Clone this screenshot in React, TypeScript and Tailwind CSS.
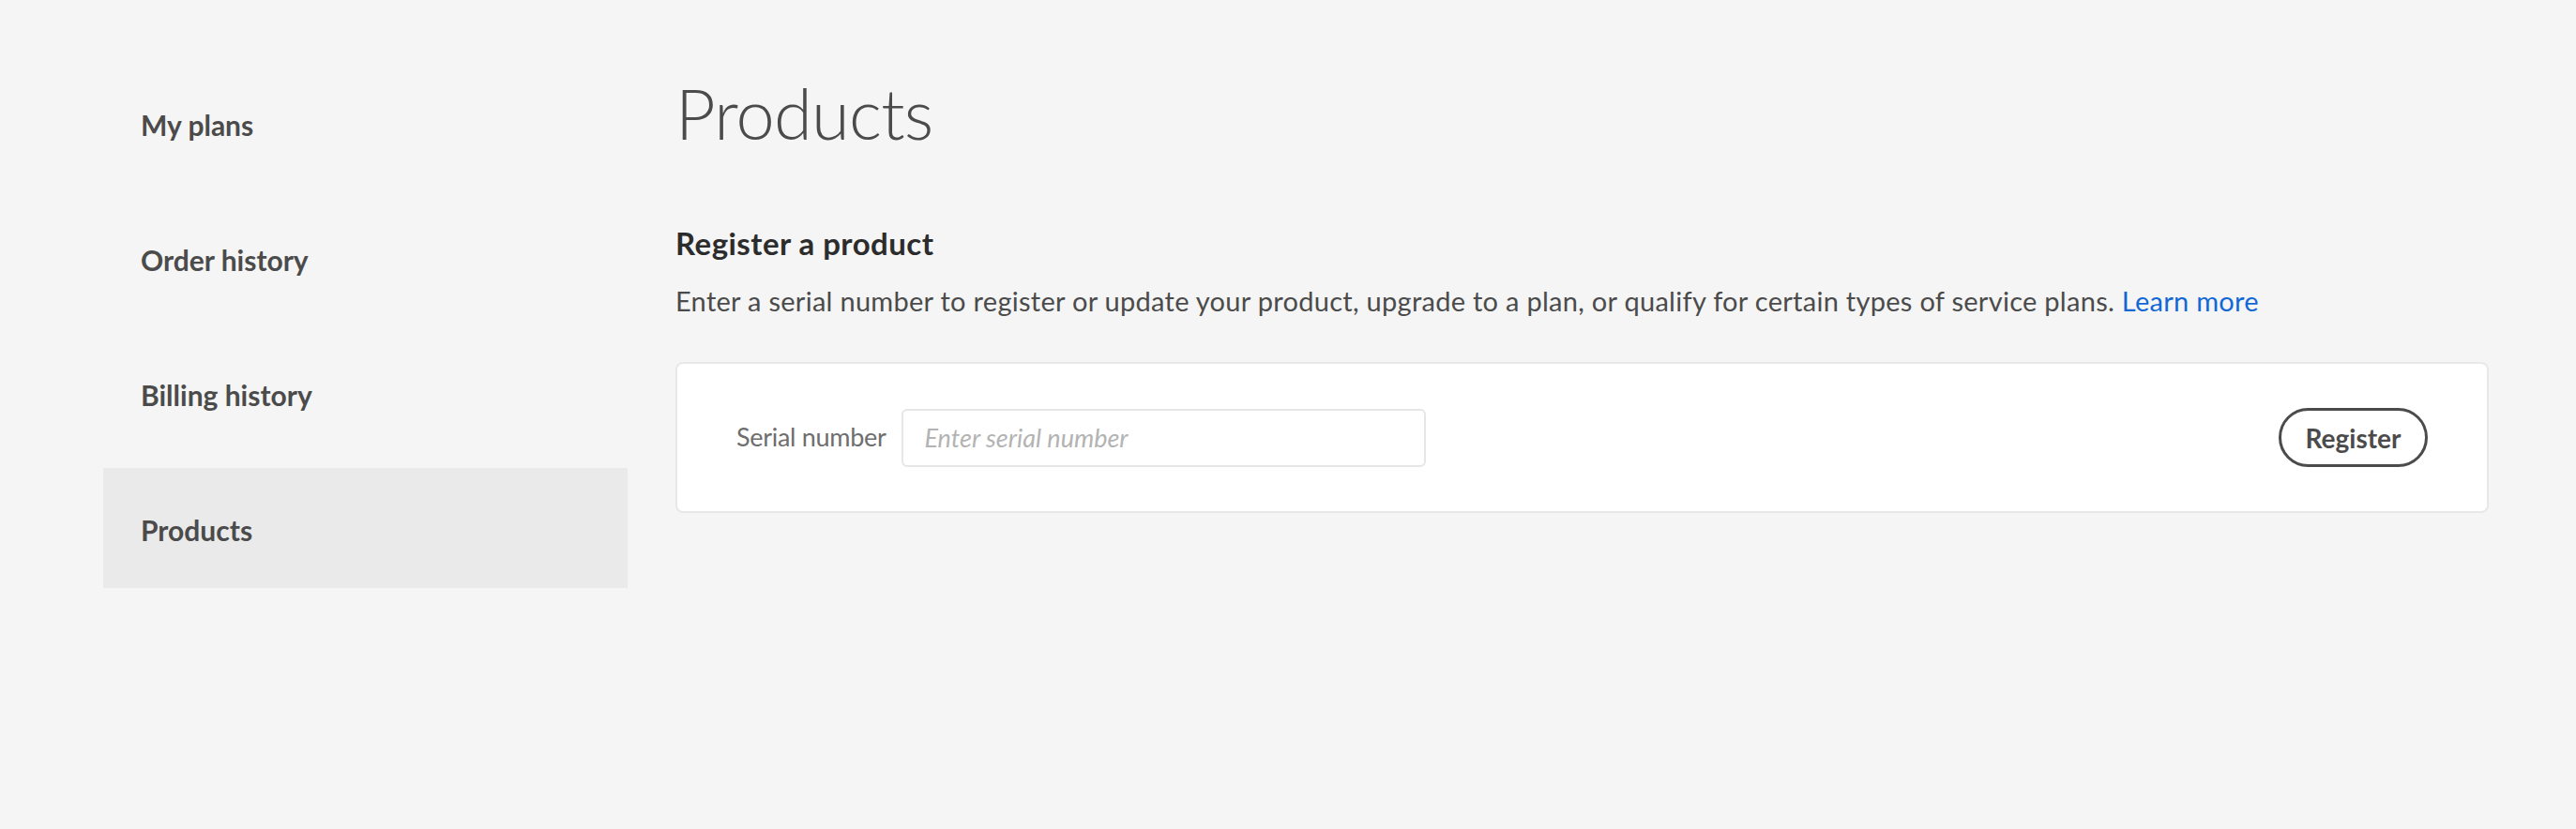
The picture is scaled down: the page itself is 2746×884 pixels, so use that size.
import { useState } from "react";

const navItems = ["My plans", "Order history", "Billing history", "Products"];

export default function App() {
  const [serial, setSerial] = useState("");
  const active = "Products";

  return (
    <div className="min-h-[884px] w-full bg-[#f5f5f5] font-['Lato',sans-serif] text-[#4b4b4b]">
      <div className="flex pl-[110px] pr-[93px]">
        {/* side nav */}
        <nav className="flex w-[559px] shrink-0 flex-col gap-[16px] pt-[67px]">
          {navItems.map((item) => (
            <a
              key={item}
              href="#"
              className={
                "flex h-[128px] items-center pl-[40px] pt-[4px] text-[30px] font-bold text-[#4b4b4b] " +
                (item === active ? "bg-[#eaeaea]" : "")
              }
            >
              {item}
            </a>
          ))}
        </nav>

        {/* main */}
        <main className="ml-[51px] flex-1 pt-[75px]">
          <h1 className="h-[92px] text-[74px] font-light leading-[92px] tracking-[-0.75px] text-[#4b4b4b]">
            Products
          </h1>

          <h2 className="mt-[72px] h-[40px] text-[33px] font-bold leading-[40px] tracking-[0.45px] text-[#2c2c2c]">
            Register a product
          </h2>
          <p className="mt-[22px] h-[40px] text-[29px] leading-[40px] tracking-[0.28px] text-[#4b4b4b]">
            Enter a serial number to register or update your product, upgrade to a plan, or qualify for certain
            types of service plans.{" "}
            <a href="#" className="text-[#1268d3]">
              Learn more
            </a>
          </p>

          <div className="mt-[45px] flex h-[161px] items-center rounded-[8px] border-2 border-[#e8e8e8] bg-white pl-[63px] pr-[63px]">
            <label htmlFor="serial" className="text-[27px] tracking-[-0.3px] text-[#6e6e6e]">
              Serial number
            </label>
            <input
              id="serial"
              value={serial}
              onChange={(e) => setSerial(e.target.value)}
              placeholder="Enter serial number"
              className="ml-[17px] h-[62px] w-[559px] rounded-[6px] border-2 border-[#e6e6e6] bg-white pl-[22px] text-[27px] text-[#4b4b4b] outline-none placeholder:italic placeholder:text-[#b3b3b3]"
            />
            <button className="ml-auto h-[63px] w-[159px] rounded-full border-[3px] border-[#4b4b4b] text-[28px] font-bold text-[#4b4b4b]">
              Register
            </button>
          </div>
        </main>
      </div>
    </div>
  );
}
